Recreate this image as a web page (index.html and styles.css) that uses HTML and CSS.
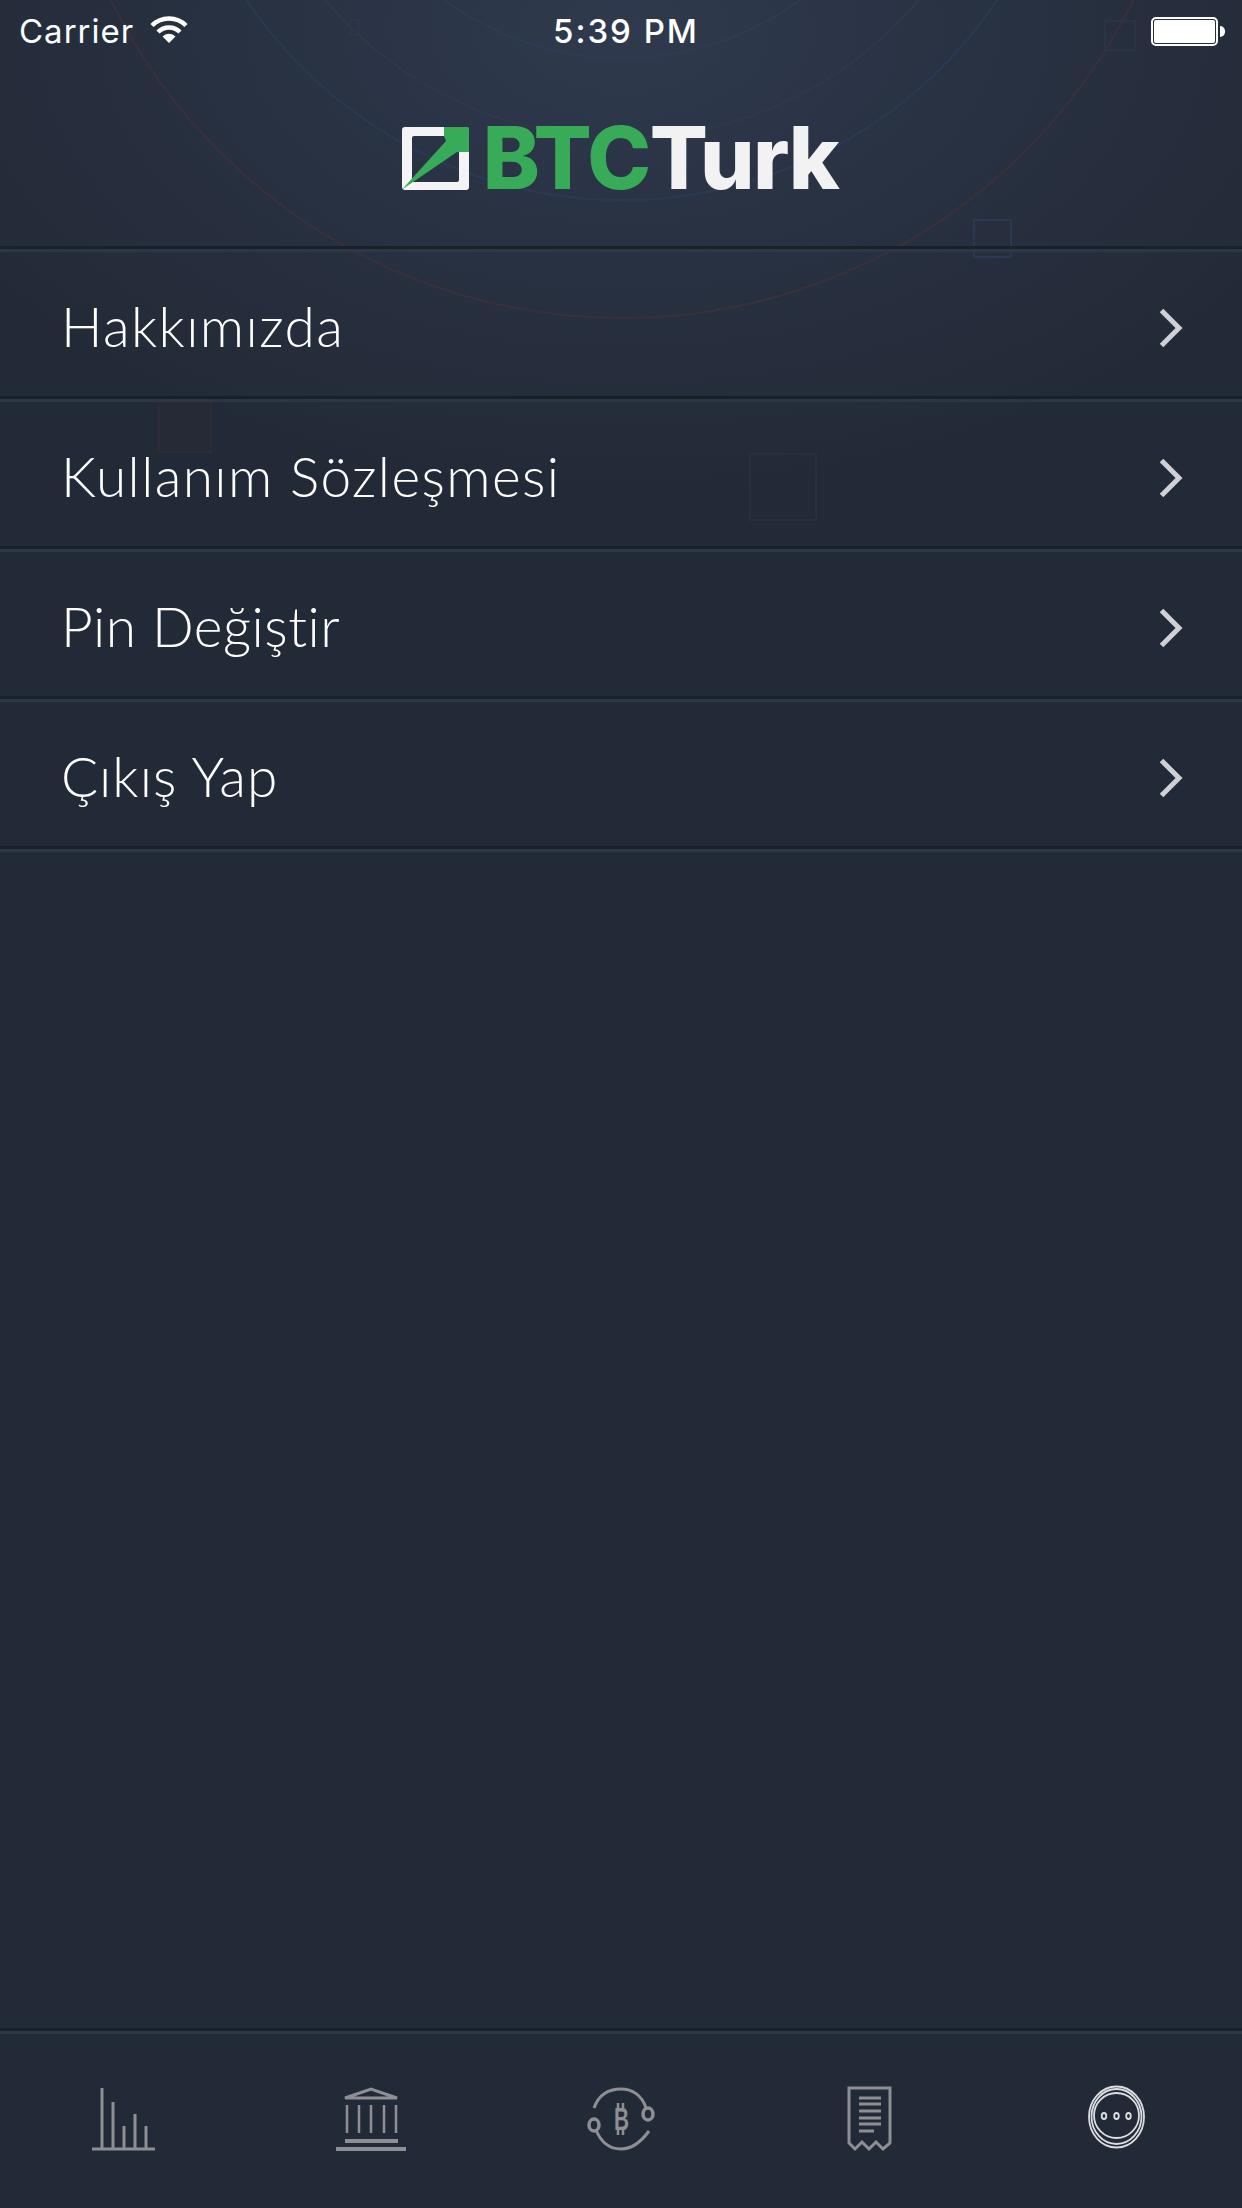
FILE: index.html
```html
<!DOCTYPE html>
<html lang="tr">

<head>
    <meta charset="UTF-8">
    <meta name="viewport" content="width=device-width, initial-scale=1.0">
    <title>BTCTurk</title>
    <link rel="stylesheet" href="styles.css">
</head>

<body>
    <div class="screen">
        <!-- faint rings and squares behind the header -->
        <svg class="backdrop" width="1242" height="560" viewBox="0 0 1242 560" fill="none">
            <circle cx="622" cy="-252" r="570" stroke="#39303c" stroke-width="2" />
            <circle cx="622" cy="-252" r="452" stroke="#2b3a52" stroke-width="2" />
            <circle cx="622" cy="-250" r="388" stroke="#303949" stroke-width="2" />
            <circle cx="622" cy="-245" r="303" stroke="#2d3c53" stroke-width="2" />
            <rect x="974" y="220" width="37" height="37" stroke="#2a3950" stroke-width="2" />
            <rect x="1105" y="21" width="30" height="29" stroke="#2a3444" stroke-width="2" />
            <rect x="350" y="20" width="9" height="15" stroke="#2d3748" stroke-width="2" />
            <rect x="159" y="402" width="52" height="50" fill="#262a36" stroke="#2d2b36" stroke-width="2" />
            <rect x="750" y="454" width="66" height="66" stroke="#2c2e39" stroke-width="2" />
        </svg>

        <header class="top">
            <div class="status-bar">
                <div class="status-left">
                    <span>Carrier</span>
                    <svg class="wifi" width="38" height="28" viewBox="0 0 38 28" fill="none" stroke="#fff" stroke-width="4.5">
                        <path d="M2 10.5a24 24 0 0 1 34 0" />
                        <path d="M8 17a15.5 15.5 0 0 1 22 0" />
                        <path d="M12.5 21.5a9 9 0 0 1 13 0L19 28z" fill="#fff" stroke="none" />
                    </svg>
                </div>
                <div class="status-time">5:39 PM</div>
                <div class="status-right">
                    <div class="battery"></div>
                    <div class="battery-nub"></div>
                </div>
            </div>
            <div class="logo">
                <svg class="logo-mark" width="67" height="63" viewBox="0 0 67 63">
                    <path fill-rule="evenodd" d="M3 0H64a3 3 0 0 1 3 3V60a3 3 0 0 1-3 3H3a3 3 0 0 1-3-3V3a3 3 0 0 1 3-3zM12 9a2 2 0 0 0-2 2V53a2 2 0 0 0 2 2H55a2 2 0 0 0 2-2V11a2 2 0 0 0-2-2z" fill="#f4f4f6" />
                    <path d="M0 62.500L44 14 42 9V0H65a2 2 0 0 1 2 2V25H55z" fill="#38ab59" />
                </svg>
                <div class="logo-text"><span class="logo-green">BTC</span><span class="logo-white">Turk</span></div>
            </div>
        </header>

        <nav class="menu">
            <div class="menu-row">
                <span>Hakkımızda</span>
                <svg class="chevron" width="24" height="40" viewBox="0 0 24 40" fill="none"><path d="M2.500 2.500L20 20 2.500 37.500" /></svg>
            </div>
            <div class="menu-row">
                <span>Kullanım Sözleşmesi</span>
                <svg class="chevron" width="24" height="40" viewBox="0 0 24 40" fill="none"><path d="M2.500 2.500L20 20 2.500 37.500" /></svg>
            </div>
            <div class="menu-row menu-row-tight">
                <span>Pin Değiştir</span>
                <svg class="chevron" width="24" height="40" viewBox="0 0 24 40" fill="none"><path d="M2.500 2.500L20 20 2.500 37.500" /></svg>
            </div>
            <div class="menu-row">
                <span>Çıkış Yap</span>
                <svg class="chevron" width="24" height="40" viewBox="0 0 24 40" fill="none"><path d="M2.500 2.500L20 20 2.500 37.500" /></svg>
            </div>
        </nav>

        <footer class="tabs">
            <div class="tab">
                <svg width="84" height="72" viewBox="0 0 84 72" fill="none" stroke="#8e8f92" stroke-width="3">
                    <path d="M10 66h63" />
                    <path d="M20 5v61M31 19v47M42 43v23M53 31v35M64 43v23" />
                </svg>
            </div>
            <div class="tab">
                <svg width="84" height="72" viewBox="0 0 84 72" fill="none" stroke="#8e8f92" stroke-width="3">
                    <path d="M14 15L40 6l26 9z" />
                    <path d="M16 22v28M28 22v28M40 22v28M53 22v28M65 22v28" stroke-width="2.500" />
                    <path d="M14 58h53" stroke-width="4" />
                    <path d="M5 66h70" stroke-width="4" />
                </svg>
            </div>
            <div class="tab">
                <svg width="84" height="72" viewBox="0 0 84 72" fill="none" stroke="#8e8f92" stroke-width="3">
                    <path d="M15 25C20 11 31 6 42 6c11 0 21 6 25 19" />
                    <path d="M17 47c5 12 14 19 25 19s20-7 28-18" />
                    <ellipse cx="69" cy="31" rx="5" ry="6" stroke-width="3.500" />
                    <ellipse cx="15" cy="42" rx="5" ry="6" stroke-width="3.500" />
                    <text class="coin-b" x="35" y="47" textLength="15" lengthAdjust="spacingAndGlyphs">B</text>
                    <path d="M39 20v5M44 20v5M39 47v5M44 47v5" stroke-width="2.500" />
                </svg>
            </div>
            <div class="tab">
                <svg width="84" height="72" viewBox="0 0 84 72" fill="none" stroke="#8e8f92" stroke-width="3">
                    <path d="M22 5h41v55l-7 6-7-7-7 7-7-7-7 7-6-6z" />
                    <path d="M32 15h22M32 21h22M32 28h22M32 35h22M32 41h22" />
                    <path d="M32 48h15" />
                </svg>
            </div>
            <div class="tab">
                <svg width="84" height="72" viewBox="0 0 84 72" fill="none" stroke="#dcdde0" stroke-width="1.800">
                    <circle cx="40.500" cy="32.500" r="22.500" />
                    <ellipse cx="40.500" cy="33.500" rx="25" ry="27.500" />
                    <ellipse cx="40.500" cy="34" rx="27.500" ry="30.500" />
                    <ellipse cx="28" cy="33" rx="2.300" ry="3" />
                    <ellipse cx="40.500" cy="33" rx="2.300" ry="3" />
                    <ellipse cx="52.500" cy="33" rx="2.300" ry="3" />
                </svg>
            </div>
        </footer>
    </div>
</body>

</html>
```

FILE: styles.css
```css
* {
    margin: 0;
    padding: 0;
    box-sizing: border-box;
}

body {
    background-color: #232a37;
}

.screen {
    position: relative;
    width: 1242px;
    height: 2208px;
    display: flex;
    flex-direction: column;
    overflow: hidden;
    color: #fff;
    background: radial-gradient(ellipse 760px 460px at 622px 30px, #2f3a4e 0%, #293243 45%, #232a37 100%);
}

.backdrop {
    position: absolute;
    top: 0;
    left: 0;
}

.top {
    position: relative;
    height: 246px;
}

.status-bar {
    display: grid;
    grid-template-columns: 1fr auto 1fr;
    align-items: center;
    height: 62px;
    padding: 0 17px 0 19px;
    font-family: Inter, sans-serif;
    font-size: 33px;
    letter-spacing: 1px;
}

.status-left {
    display: flex;
    align-items: center;
    gap: 16px;
}

.wifi {
    margin-top: -4px;
}

.status-time {
    font-weight: 500;
    letter-spacing: 2px;
    margin-left: 8px;
}

.status-right {
    display: flex;
    justify-content: flex-end;
    align-items: center;
}

.battery {
    width: 67px;
    height: 29px;
    background-color: #fff;
    background-clip: content-box;
    border: 2px solid #fff;
    padding: 1px;
    border-radius: 5px;
}

.battery-nub {
    width: 5px;
    height: 11px;
    margin-left: 2px;
    background-color: #fff;
    border-radius: 0 6px 6px 0;
}

.logo {
    display: flex;
    justify-content: center;
    align-items: center;
    gap: 14px;
    margin-top: 65px;
    height: 63px;
    padding-right: 2px;
}

.logo-text {
    font-family: Inter, sans-serif;
    font-size: 86px;
    font-weight: 800;
    line-height: 63px;
    letter-spacing: -1.600px;
}

.logo-green {
    color: #38ab59;
}

.logo-white {
    color: #f2f2f3;
}

.menu {
    position: relative;
}

.menu::after {
    content: "";
    display: block;
    height: 3px;
    background-color: #2b3746;
    border-top: 3px solid #18202a;
}

.menu-row {
    display: flex;
    justify-content: space-between;
    align-items: center;
    height: 150px;
    padding: 6px 59px 0 61px;
    border-top: 3px solid #18202a;
    box-shadow: inset 0 3px 0 #2b3746;
    font-family: Lato, sans-serif;
    font-weight: 300;
    font-size: 55px;
    letter-spacing: 1.100px;
}

.menu-row:first-child,
.menu-row:nth-child(2) {
    letter-spacing: 1.400px;
}

.menu-row-tight {
    letter-spacing: 0.500px;
}

.chevron {
    stroke: #cfd0d6;
    stroke-width: 5;
    margin-top: 4px;
}

.tabs {
    position: relative;
    margin-top: auto;
    height: 180px;
    display: grid;
    grid-template-columns: repeat(5, 1fr);
    padding-top: 52px;
    border-top: 3px solid #18202a;
    box-shadow: inset 0 3px 0 #2b3746;
}

.tab {
    display: flex;
    justify-content: center;
    align-items: flex-start;
}

.coin-b {
    font-family: "Liberation Sans", sans-serif;
    font-size: 31px;
    font-weight: 700;
    fill: #8e8f92;
    stroke: none;
}
```
